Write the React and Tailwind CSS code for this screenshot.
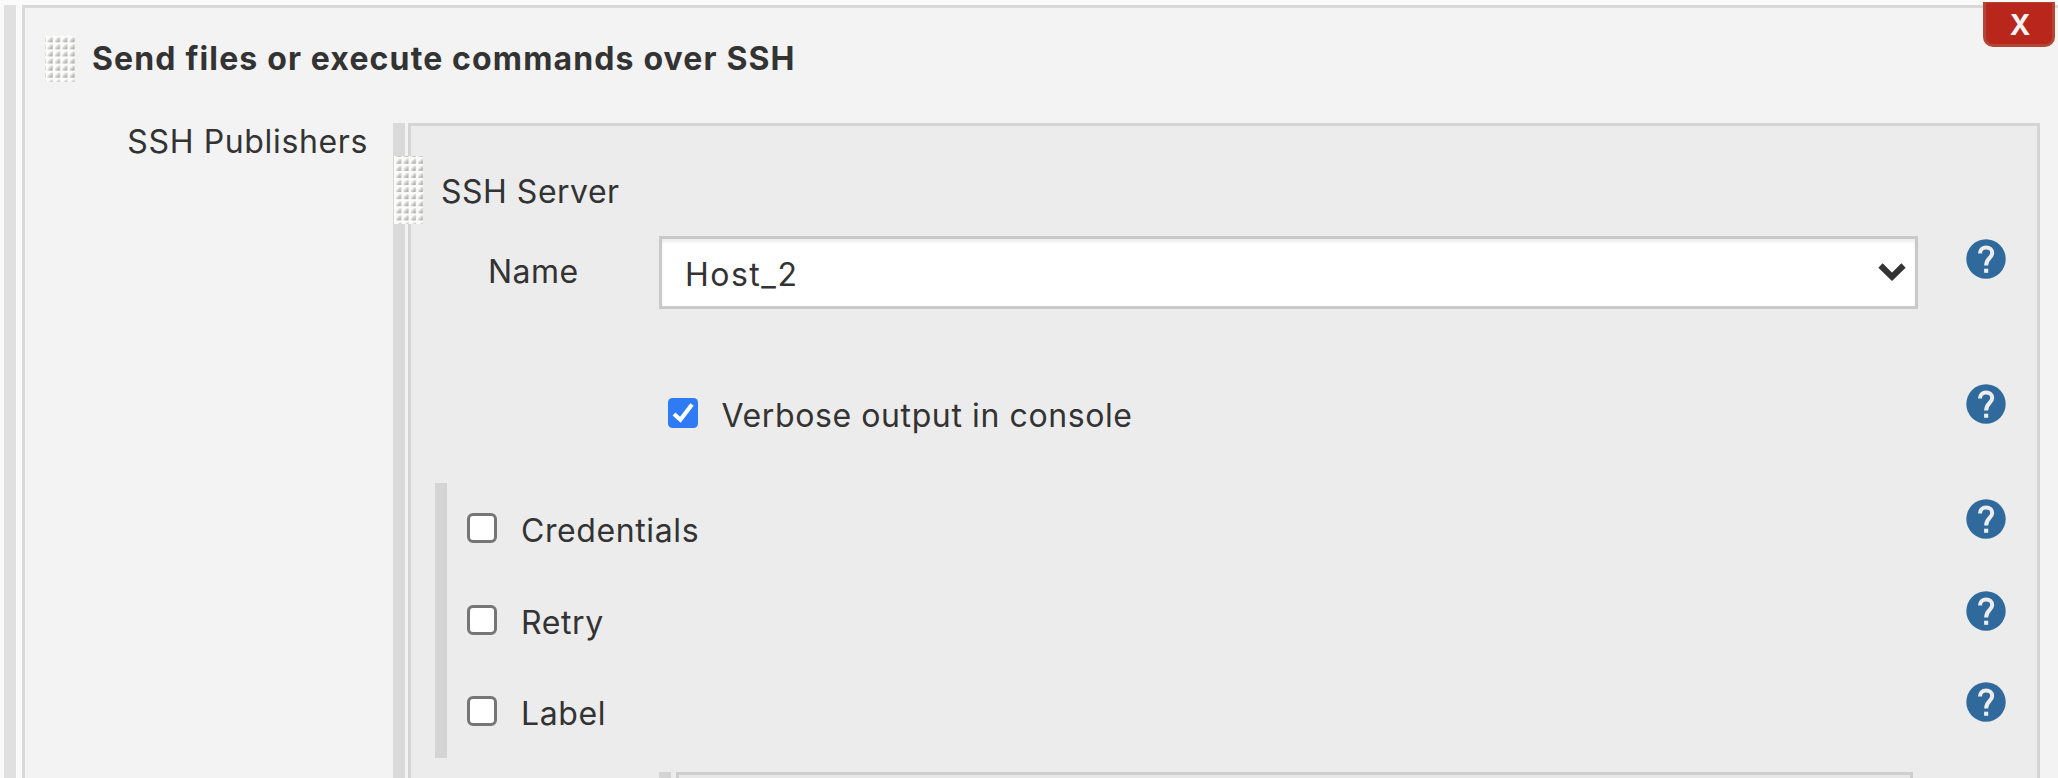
import React from "react";

function Grip({ id, className, x, y }) {
  return (
    <svg className={className} aria-hidden="true">
      <defs>
        <linearGradient id={id + "g"} x1="0" y1="0" x2="1" y2="1">
          <stop offset="0.2" stopColor="#f4f4f3" />
          <stop offset="0.8" stopColor="#b0b0ae" />
        </linearGradient>
        <pattern id={id} x={x} y={y} width="7.33" height="7.08" patternUnits="userSpaceOnUse">
          <rect width="7.33" height="7.08" fill="#fcfcfb" />
          <path d="M0.2 5.2V3L3.2 0.2H5.2V5.2Z" fill={"url(#" + id + "g)"} />
        </pattern>
      </defs>
      <rect width="100%" height="100%" fill={"url(#" + id + ")"} />
    </svg>
  );
}

function Help() {
  return (
    <svg viewBox="0 0 40 40" className="block size-10 shrink-0" role="img" aria-label="Help">
      <circle cx="20" cy="20" r="19.7" fill="#306a9d" />
      <path
        d="M14 14.6C14 10.8 16.4 8.6 20.1 8.6C23.8 8.6 26.2 10.7 26.2 14C26.2 18.8 20.1 19.2 20.1 26.5"
        fill="none"
        stroke="#ededed"
        strokeWidth="4"
      />
      <rect x="18.1" y="29.7" width="4.1" height="4.1" fill="#ededed" />
    </svg>
  );
}

function Checkbox({ checked }) {
  return checked ? (
    <svg viewBox="0 0 30 30" className="block size-[30px] shrink-0">
      <rect width="30" height="30" rx="4.5" fill="#2f7bf6" />
      <path d="M6 16L12.4 21.7L24 6.5" fill="none" stroke="#fff" strokeWidth="4.2" />
    </svg>
  ) : (
    <span className="block size-[30px] shrink-0 rounded-[6px] border-[3px] border-[#767676] bg-white" />
  );
}

function OptionRow({ label }) {
  return (
    <div className="flex h-[91.5px] items-start">
      <div className="h-full w-3 bg-[#d4d4d4]" />
      <div className="ml-5 mt-[30px]">
        <Checkbox />
      </div>
      <span className="ml-6 mt-7 tracking-[0.6px]">{label}</span>
      <div className="ml-auto mr-[31px] mt-4">
        <Help />
      </div>
    </div>
  );
}

export default function App() {
  return (
    <div className="flex h-[778px] w-[2058px] overflow-hidden bg-[#fafafa] pl-1 pt-[5px] font-[Inter,sans-serif] text-[32px] leading-10 whitespace-nowrap text-[#333]">
      <div className="w-3 shrink-0 bg-[#e0e0e0]" />
      <section className="relative ml-1.5 flex min-w-0 flex-1 flex-col border-l-[3px] border-t-[3px] border-[#d9d9d9] bg-[#f3f3f3]">
        <header className="flex h-[115px] shrink-0 items-start pl-5">
          <Grip id="grip-a" className="mt-[27px] h-[47px] w-[30px]" x={2.5} y={2} />
          <h1 className="ml-[17px] mt-[31px] font-bold tracking-[1.14px]">
            Send files or execute commands over SSH
          </h1>
        </header>
        <button className="absolute right-[3px] -top-1.5 flex h-[45px] w-[72px] items-center justify-center rounded-b-[10px] border-[3px] border-t-[1px] border-[#b24636] bg-[#b9261c] pl-0.5 pt-0.5 text-[28px] leading-none font-bold text-[#f3f3f3]">
          X
        </button>

        <div className="flex min-h-0 flex-1">
          <div className="-mt-px w-[368px] shrink-0 pr-[25px] text-right tracking-[0.64px]">SSH Publishers</div>
          <div className="w-3 shrink-0 bg-[#d9d9d9]" />
          <div className="relative ml-[3px] mr-[18px] flex flex-1 flex-col border-x-[3px] border-t-[3px] border-[#d4d4d4] bg-[#ececec]">
            <Grip id="grip-b" className="absolute -left-[17px] top-[30px] h-[68px] w-[29px]" x={2} y={2.5} />
            <h2 className="h-[110px] shrink-0 pl-[30px] pt-[46px] tracking-[0.5px]">SSH Server</h2>

            <div className="flex h-[136px] shrink-0 items-start">
              <label className="mt-4 w-[248px] pl-[77px] tracking-[0.5px]">Name</label>
              <div className="flex h-[73px] w-[1259px] items-start justify-between border-[3px] border-[#c9c9c9] bg-white pl-[23px] pr-[9px] shadow-[inset_0_3px_3px_rgba(0,0,0,0.07)]">
                <span className="mt-4 tracking-[1.5px]">Host_2</span>
                <svg viewBox="0 0 28 20" className="mt-6 h-5 w-7">
                  <path d="M2.5 2.5L14 13.8L25.5 2.5" fill="none" stroke="#333" strokeWidth="6" />
                </svg>
              </div>
              <div className="ml-auto mr-[31px] mt-[3px]">
                <Help />
              </div>
            </div>

            <div className="flex h-[111px] shrink-0 items-start pl-[257px]">
              <div className="mt-[26px]">
                <Checkbox checked />
              </div>
              <span className="ml-[23.5px] mt-6 tracking-[0.6px]">Verbose output in console</span>
              <div className="ml-auto mr-[31px] mt-3">
                <Help />
              </div>
            </div>

            <div className="shrink-0 pl-6">
              <OptionRow label="Credentials" />
              <OptionRow label="Retry" />
              <OptionRow label="Label" />
            </div>

            <div className="mt-[14.5px] flex h-[6px] shrink-0 pl-[248px]">
              <div className="w-3 bg-[#d4d4d4]" />
              <div className="ml-[5px] w-[1237px] border-x-[3px] border-t-[3px] border-[#cecece] bg-[#e8e8e8]" />
            </div>
          </div>
        </div>
      </section>
    </div>
  );
}
